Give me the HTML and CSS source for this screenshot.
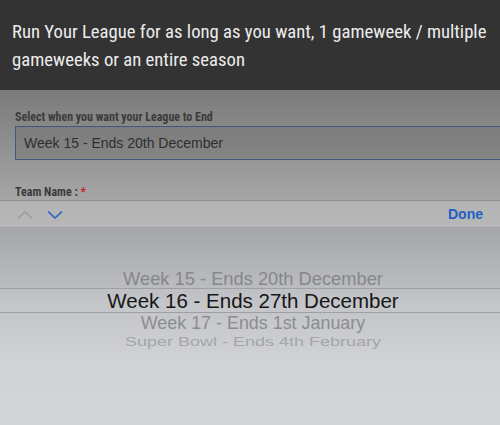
FILE: index.html
```html
<!DOCTYPE html>
<html lang="en">
<head>
  <meta charset="UTF-8" />
  <meta name="viewport" content="width=device-width, initial-scale=1.0"/>
  <title>League End</title>
  <link rel="stylesheet" href="styles.css">
</head>
<body>

  <!-- Info banner -->
  <div class="banner">
    <p>Run Your League for as long as you want, 1 gameweek / multiple gameweeks or an entire season</p>
  </div>

  <!-- Form behind the picker (dimmed) -->
  <div class="form-area">
    <label class="field-label">Select when you want your League to End</label>
    <div class="select-box">Week 15 - Ends 20th December</div>
    <label class="field-label team-label">Team Name : <span class="required">*</span></label>
  </div>

  <!-- Keyboard accessory bar -->
  <div class="toolbar">
    <div class="arrows">
      <svg class="arrow arrow-up" width="16" height="8" viewBox="0 0 16 8">
        <path d="M1 7.5 L8 1 L15 7.5" fill="none" stroke="currentColor" stroke-width="1.4"/>
      </svg>
      <svg class="arrow arrow-down" width="16" height="8" viewBox="0 0 16 8">
        <path d="M1 0.5 L8 7 L15 0.5" fill="none" stroke="currentColor" stroke-width="1.6"/>
      </svg>
    </div>
    <span class="done">Done</span>
  </div>

  <!-- Wheel picker -->
  <div class="picker">
    <div class="wheel">
      <div class="option option-prev">Week 15 - Ends 20th December</div>
      <div class="option option-selected">Week 16 - Ends 27th December</div>
      <div class="option option-next">Week 17 - Ends 1st January</div>
      <div class="option option-far">Super Bowl - Ends 4th February</div>
    </div>
  </div>

</body>
</html>
```

FILE: styles.css
```css
body {
  margin: 0;
  width: 500px;
  height: 425px;
  overflow: hidden;
  font-family: 'Liberation Sans', Arial, sans-serif;
  background-color: #d2d4d8;
}

.banner {
  height: 90px;
  box-sizing: border-box;
  padding: 18px 12px 0;
  background-color: #333333;
  color: #ececec;
}

.banner p {
  margin: 0;
  font-family: 'Roboto Condensed', 'Liberation Sans Narrow', 'DejaVu Sans Condensed', Roboto, sans-serif;
  font-stretch: condensed;
  font-size: 18.7px;
  line-height: 28px;
}

.form-area {
  height: 111px;
  box-sizing: border-box;
  padding: 19px 0 0 15px;
  background: linear-gradient(to bottom, #7a7a7a, #a6a6a6);
  border-bottom: 1px solid #8e8e8e;
}

.field-label {
  display: block;
  font-family: 'Roboto Condensed', 'Liberation Sans Narrow', 'DejaVu Sans Condensed', Roboto, sans-serif;
  font-stretch: condensed;
  font-size: 12px;
  font-weight: bold;
  color: #3b3b3b;
  line-height: 16px;
}

.team-label {
  margin-top: 24px;
}

.required {
  color: #c0262a;
}

.select-box {
  height: 34px;
  box-sizing: border-box;
  margin-top: 1px;
  margin-right: -10px;
  padding: 8px 8px 6px 8px;
  border: 1px solid #3e5a7e;
  background: linear-gradient(to bottom, #7c7c7c, #858585);
  color: #2e2e2e;
  font-size: 14px;
  line-height: 17px;
}

.toolbar {
  height: 26px;
  display: flex;
  align-items: center;
  justify-content: space-between;
  padding: 0 17px 0 17px;
  background: linear-gradient(to bottom, #b3b3b3, #b8b8b8);
  border-bottom: 1px solid #a0a0a2;
}

.arrows {
  display: flex;
  gap: 14px;
  padding-top: 2px;
}

.arrow-up {
  color: #9c9c9c;
}

.arrow-down {
  color: #2a64c6;
}

.done {
  font-size: 14px;
  font-weight: bold;
  color: #1f5fc2;
}

.picker {
  height: 197px;
  background: linear-gradient(to bottom, #a5a6a9 0%, #c5c7cb 45%, #d1d3d7 70%, #d2d4d8 100%);
}

.wheel {
  padding-top: 42px;
  text-align: center;
}

.option {
  white-space: nowrap;
  padding-left: 6px;
}

.option-prev {
  font-size: 18.3px;
  line-height: 18px;
  color: #86878a;
}

.option-selected {
  font-size: 20.5px;
  line-height: 23px;
  color: #161616;
  border-top: 1px solid #9ea0a4;
  border-bottom: 1px solid #9ea0a4;
  background-color: rgba(255, 255, 255, 0.05);
}

.option-next {
  font-size: 17.9px;
  line-height: 20px;
  color: #8c8d90;
}

.option-far {
  font-size: 18px;
  line-height: 18px;
  color: #a4a6a9;
  transform: scaleY(0.72);
}
```
